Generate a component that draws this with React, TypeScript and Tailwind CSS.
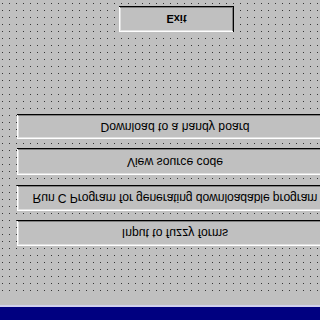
import React from "react";

const bevel =
  "shadow-[inset_-1px_-1px_#000,inset_1px_1px_#fff,inset_-2px_-2px_#808080,inset_2px_2px_#dfdfdf]";

function Btn({ label, className }: { label: string; className: string }) {
  return (
    <div
      className={`flex items-center justify-center bg-[#c0c0c0] text-black whitespace-nowrap ${bevel} ${className}`}
    >
      {label}
    </div>
  );
}

export default function App() {
  return (
    <div
      className="w-[320px] h-[320px] overflow-hidden -scale-y-100 flex flex-col bg-[#c0c0c0]"
      style={{ fontFamily: '"Liberation Sans", Arial, sans-serif' }}
    >
      <div className="h-[13px] shrink-0 bg-[#000080]" />
      <div className="h-[2px] shrink-0 bg-[#d0d0ec]" />
      <div className="h-[11px] shrink-0 bg-[#c0c0c0]" />
      <div className="flex-1 flex flex-col pl-[17px] pt-[48px] bg-[radial-gradient(circle_at_0.5px_0.5px,#353535_0.6px,transparent_0.9px)] bg-[length:7px_7px] bg-[position:2px_3px]">
        <Btn label="Input to fuzzy forms" className="w-[316px] h-[26px] text-[12.2px]" />
        <Btn
          label="Run C Program for generating downloadable program"
          className="w-[316px] h-[26px] mt-[9px] text-[12.2px] tracking-[-0.12px]"
        />
        <Btn label="View source code" className="w-[316px] h-[27px] mt-[10px] text-[12.2px]" />
        <Btn label="Download to a handy board" className="w-[316px] h-[25px] mt-[9px] text-[12.2px]" />
        <Btn label="Exit" className="w-[115px] h-[26px] mt-[82px] ml-[102px] text-[11px] font-bold" />
      </div>
    </div>
  );
}
